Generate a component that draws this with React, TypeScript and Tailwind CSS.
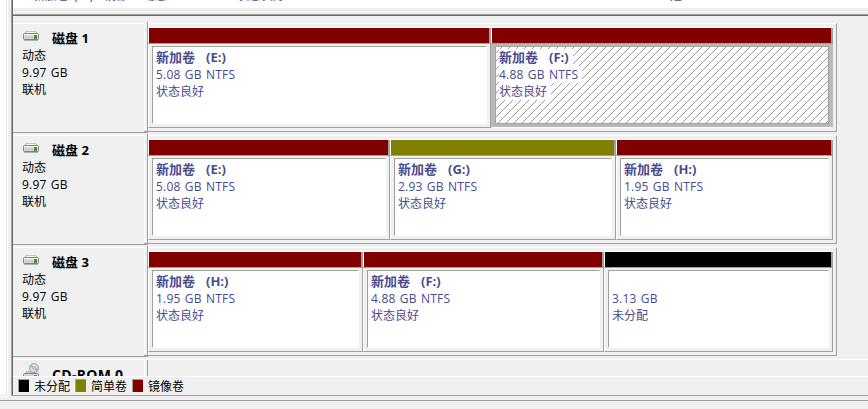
import type { ReactNode } from 'react';

type Volume = { letter?: string; size: string; status: string; width: string; bar: string; selected?: boolean };
type Disk = { name: string; volumes: Volume[] };

const RED = 'bg-[#800000]';
const OLIVE = 'bg-[#808000]';

const disks: Disk[] = [
  {
    name: '1',
    volumes: [
      { letter: '(E:)', size: '5.08 GB NTFS', status: '状态良好', width: 'w-[343px]', bar: RED },
      { letter: '(F:)', size: '4.88 GB NTFS', status: '状态良好', width: 'w-[342px]', bar: RED, selected: true },
    ],
  },
  {
    name: '2',
    volumes: [
      { letter: '(E:)', size: '5.08 GB NTFS', status: '状态良好', width: 'w-[242px]', bar: RED },
      { letter: '(G:)', size: '2.93 GB NTFS', status: '状态良好', width: 'w-[226px]', bar: OLIVE },
      { letter: '(H:)', size: '1.95 GB NTFS', status: '状态良好', width: 'w-[217px]', bar: RED },
    ],
  },
  {
    name: '3',
    volumes: [
      { letter: '(H:)', size: '1.95 GB NTFS', status: '状态良好', width: 'w-[215px]', bar: RED },
      { letter: '(F:)', size: '4.88 GB NTFS', status: '状态良好', width: 'w-[241px]', bar: RED },
      { size: '3.13 GB', status: '未分配', width: 'w-[229px]', bar: 'bg-black' },
    ],
  },
];

function DriveIcon() {
  return (
    <svg width="16" height="10" viewBox="0 0 16 10" className="ml-px block shrink-0">
      <path d="M3 0h10l2 3H1z" fill="#c4c4c6" />
      <path d="M3.5 1h9l1.3 2H2.2z" fill="#ededee" />
      <rect x=".5" y="2.5" width="15" height="6" rx="1" fill="#d6d6dc" stroke="#88888c" />
      <path d="M1 3.5h14" stroke="#f6f6f8" />
      <path d="M1 9h14" stroke="#77777a" />
      <path d="M2 6.5h8" stroke="#c6c6ce" />
      <path d="M11 4h3v4h-3z" fill="#4f9e3c" />
      <path d="M12 5h1v2h-1z" fill="#2c7a20" />
    </svg>
  );
}

function CdIcon() {
  return (
    <svg width="16" height="15" viewBox="0 0 16 15" className="ml-px block shrink-0">
      <path d="M3 8h10l2 3H1z" fill="#c4c4c6" />
      <rect x=".5" y="10.5" width="15" height="6" rx="1" fill="#d6d6dc" stroke="#88888c" />
      <circle cx="11" cy="5" r="4.5" fill="#dcdfe0" stroke="#a0a4a6" />
      <path d="M11 5L8 1.6A4.5 4.5 0 0 0 6.8 4z" fill="#8fc694" />
      <path d="M11 5l3 3.4A4.5 4.5 0 0 0 15.2 6z" fill="#b79bc4" />
      <circle cx="11" cy="5" r="1.3" fill="#fff" stroke="#888" strokeWidth=".7" />
      <path d="M11 12h3v3h-3z" fill="#4f9e3c" />
    </svg>
  );
}

function Line({ children }: { children: ReactNode }) {
  return <div className="h-[17px] whitespace-pre">{children}</div>;
}

function VolumeCell({ volume }: { volume: Volume }) {
  const { letter, size, status, width, bar, selected } = volume;
  const mark = selected ? 'bg-white pr-1 inline-block h-[17px]' : '';
  return (
    <div className={`${width} flex h-[101px] shrink-0 flex-col`}>
      <div className="flex h-4 border-t border-l border-white">
        <div className={`grow ${bar}`} />
        <div className="w-0.5 bg-[#a0a0a0]" />
      </div>
      <div className="h-px bg-[#a0a0a0]" />
      <div
        className={`flex grow border-r border-b border-l pt-0.5 pr-[3px] pb-[3px] pl-[3px] ${selected ? 'border-r-[#b9b9b9] border-b-white border-l-[#b9b9b9] bg-[#b9b9b9]' : 'border-r-[#a0a0a0] border-b-[#a0a0a0] border-l-white'}`}
      >
        <div
          className={`relative grow overflow-hidden border border-t-[#a0a0a0] border-l-[#a0a0a0] bg-white ${selected ? 'border-r-[#a0a0a0] border-b-[#a0a0a0]' : 'border-r-white border-b-white'}`}
        >
          {selected && (
            <svg className="absolute inset-0 h-full w-full" shapeRendering="crispEdges">
              <defs>
                <pattern id="hatch" width="8" height="8" patternUnits="userSpaceOnUse">
                  {[0, 1, 2, 3, 4, 5, 6, 7].map((i) => (
                    <rect key={i} x={i} y={(13 - i) % 8} width="1" height="1" fill="#a0a0a0" />
                  ))}
                </pattern>
              </defs>
              <rect width="100%" height="100%" fill="url(#hatch)" />
            </svg>
          )}
          <div className="relative pt-[2px] pl-[3px] leading-[17px] text-[#4a4a8c]">
            <Line>
              {letter && (
                <span className={`text-[13px] font-bold ${mark}`}>
                  新加卷<span className="ml-[11px]">{letter}</span>
                </span>
              )}
            </Line>
            <Line>
              <span className={`tracking-[0.2px] [word-spacing:1px] ${mark}`}>{size}</span>
            </Line>
            <Line>
              <span className={mark}>{status}</span>
            </Line>
          </div>
        </div>
      </div>
    </div>
  );
}

function DiskRow({ disk }: { disk: Disk }) {
  return (
    <div className="flex h-[112px] shrink-0">
      <div className="flex h-[110px] w-[134px] shrink-0 flex-col border-b border-[#a0a0a0]">
        <div className="h-[108px] w-[132px] border-t border-r border-white pl-[9px]">
          <div className="flex h-[23px] pt-[7px]">
            <DriveIcon />
            <div className="-mt-px ml-[13px] text-[13px] leading-[17px] font-bold">磁盘 {disk.name}</div>
          </div>
          <div className="leading-[17px]">
            <Line>动态</Line>
            <Line>
              <span className="tracking-[0.2px] [word-spacing:1px]">9.97 GB</span>
            </Line>
            <Line>联机</Line>
          </div>
        </div>
        <div className="ml-[131px] h-px w-[3px] bg-[#a0a0a0]" />
      </div>
      <div className="-mt-px h-[111px] w-px shrink-0 bg-[#a0a0a0]" />
      <div className="flex h-[109px] w-[689px] shrink-0 border-t border-r border-b border-t-white border-r-[#a0a0a0] border-b-[#a0a0a0] pt-[3px]">
        {disk.volumes.map((v) => (
          <VolumeCell key={v.size + v.status} volume={v} />
        ))}
      </div>
    </div>
  );
}

function Legend({ color, label }: { color: string; label: string }) {
  return (
    <div className="flex w-[57px] items-start">
      <div className={`mt-[2px] h-[13px] w-[11px] shrink-0 border-t border-l border-[#a0a0a0] ${color}`} />
      <span className="mt-px ml-[5px] leading-[17px] whitespace-nowrap">{label}</span>
    </div>
  );
}

export default function App() {
  return (
    <div className="flex h-[409px] w-[868px] flex-col overflow-hidden bg-[#f0f0f0] font-['Open_Sans','Noto_Sans_CJK_SC',sans-serif] text-[12px] text-black">
      <div className="flex h-[400px] shrink-0">
        <div className="h-[397px] w-2 shrink-0 border-r border-b border-white bg-white">
          <div className="h-full w-[7px] border-r border-b border-[#e3e3e3]" />
        </div>
        <div className="ml-[3px] flex h-[396px] grow flex-col border-b border-l border-[#a0a0a0]">
          <div className="flex min-h-0 grow flex-col border-l border-[#696969]">
            <div className="flex h-2 shrink-0 overflow-hidden bg-white text-[#4a4a8c]">
              <div className="-mt-[13px] flex h-[17px] leading-[17px] whitespace-pre">
                <span className="w-[91px] pl-5 [word-spacing:2px]">新加卷 (H:)</span>
                <span className="w-[39px]">镜像</span>
                <span className="w-[94px]">动态</span>
                <span className="w-[433px]">状态良好</span>
                <span>是</span>
              </div>
            </div>
            <div className="mt-[2px] h-1 shrink-0 border-t border-[#e3e3e3]">
              <div className="h-px bg-white" />
            </div>
            <div className="h-px shrink-0 bg-[#a0a0a0]" />
            <div className="h-px shrink-0 bg-[#696969]" />
            <div className="flex min-h-0 grow flex-col overflow-hidden pt-[7px]">
              {disks.map((d) => (
                <DiskRow key={d.name} disk={d} />
              ))}
              <div className="flex min-h-0 grow overflow-hidden border-t border-white">
                <div className="flex w-[132px] shrink-0 border-r border-white pt-[3px] pl-[9px]">
                  <CdIcon />
                  <div className="ml-[13px] pt-[3px] text-[14px] leading-[17px] font-bold tracking-[0.3px] whitespace-nowrap">
                    CD-ROM 0
                  </div>
                </div>
                <div className="ml-0.5 w-px bg-[#a0a0a0]" />
              </div>
            </div>
            <div className="flex h-[19px] shrink-0 border-t border-white pl-[5px]">
              <Legend color="bg-black" label="未分配" />
              <Legend color={OLIVE} label="简单卷" />
              <Legend color={RED} label="镜像卷" />
            </div>
          </div>
        </div>
      </div>
      <div className="h-px shrink-0 bg-[#a0a0a0]" />
    </div>
  );
}
